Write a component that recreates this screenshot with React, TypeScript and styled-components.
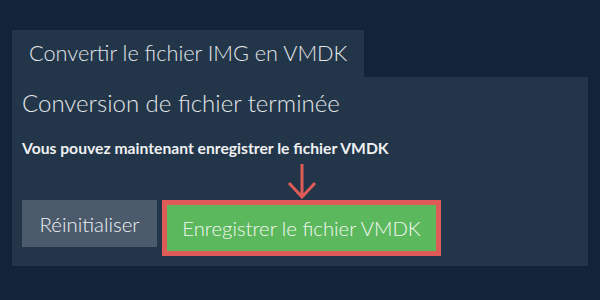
import styled, { createGlobalStyle } from 'styled-components';

const GlobalStyle = createGlobalStyle`
  html, body {
    margin: 0;
    padding: 0;
    background: #12243a;
    font-family: Lato, "Open Sans", sans-serif;
  }
`;

const App = () => {
  return (
    <>
      <GlobalStyle />
      <Page>
        <Tab>Convertir le fichier IMG en VMDK</Tab>
        <Panel>
          <Heading>Conversion de fichier terminée</Heading>
          <Message>Vous pouvez maintenant enregistrer le fichier VMDK</Message>
          <ButtonRow>
            <ResetButton>Réinitialiser</ResetButton>
            <SaveWrap>
              <Arrow width="30" height="36" viewBox="0 0 30 36">
                <path d="M15 1 L15 34 M2 20 L15 34 L28 20" fill="none" stroke="#de5b57" strokeWidth="3" />
              </Arrow>
              <SaveButton>Enregistrer le fichier VMDK</SaveButton>
            </SaveWrap>
          </ButtonRow>
        </Panel>
      </Page>
    </>
  );
};

export default App;

const Page = styled.div`
  width: 600px;
  height: 300px;
  box-sizing: border-box;
  padding: 30px 12px 0 12px;
  display: flex;
  flex-direction: column;
  align-items: flex-start;
`;

const Tab = styled.div`
  background: #233649;
  color: #e4e7ea;
  font-size: 21.7px;
  font-weight: 300;
  line-height: 47px;
  height: 47px;
  padding: 0 17px;
`;

const Panel = styled.div`
  align-self: stretch;
  background: #233649;
  padding: 12px 10px 10px 10px;
  display: flex;
  flex-direction: column;
  align-items: flex-start;
`;

const Heading = styled.div`
  color: #e4e7ea;
  font-size: 24px;
  font-weight: 300;
  line-height: 28px;
`;

const Message = styled.div`
  color: #eef0f2;
  font-size: 15.7px;
  font-weight: bold;
  line-height: 18px;
  margin-top: 22px;
`;

const ButtonRow = styled.div`
  display: flex;
  align-items: flex-start;
  gap: 5px;
  margin-top: 43px;
`;

const ResetButton = styled.button`
  background: #4b5b6c;
  color: #eef0f2;
  border: none;
  font-family: Lato, sans-serif;
  font-size: 20.4px;
  font-weight: 300;
  height: 47px;
  width: 135px;
  padding: 0;
`;

const SaveWrap = styled.div`
  position: relative;
`;

const Arrow = styled.svg`
  position: absolute;
  left: 50%;
  top: -37px;
  margin-left: -15px;
`;

const SaveButton = styled.button`
  background: #5cb85c;
  color: #f4f7f4;
  border: 5px solid #de5b57;
  font-family: Lato, sans-serif;
  font-size: 20.3px;
  font-weight: 300;
  height: 56px;
  width: 279px;
  padding: 0;
`;
